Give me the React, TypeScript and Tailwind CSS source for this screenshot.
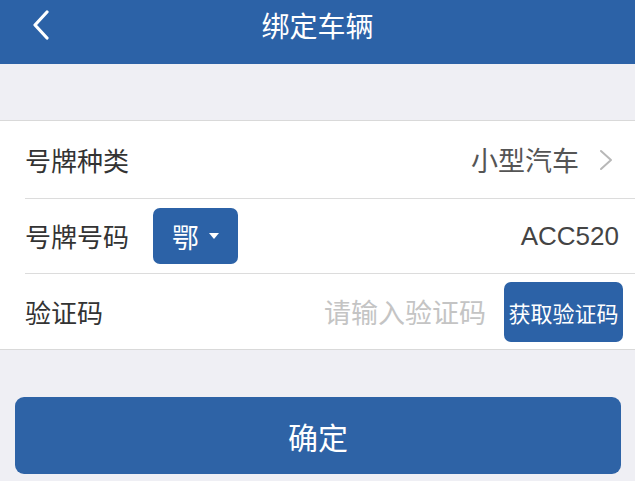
import React from 'react';

const font = { fontFamily: '"Noto Sans CJK SC", "Noto Sans", sans-serif' };

const Row: React.FC<{ label: string; children?: React.ReactNode; last?: boolean; h: string }> = ({ label, children, last, h }) => (
  <div className={`flex items-center pl-[25px] ${h}`}>
    <div className={`flex h-full flex-1 items-center pr-[13px] ${last ? '' : 'border-b border-[#dcdcdc]'}`}>
      <span className="text-[26px] text-[#333] leading-none">{label}</span>
      {children}
    </div>
  </div>
);

export default function App() {
  return (
    <div className="w-[635px] h-[481px] overflow-hidden bg-[#efeff4]" style={font}>
      <header className="relative flex h-16 items-center justify-center bg-[#2c62a7] pb-[14px]">
        <svg className="absolute left-[32px] top-[10px]" width="18" height="30" viewBox="0 0 18 30" fill="none">
          <path d="M15 2 L3 15 L15 28" stroke="white" strokeWidth="3.2" strokeLinecap="round" strokeLinejoin="round" />
        </svg>
        <h1 className="text-[28px] text-white leading-none">绑定车辆</h1>
      </header>

      <div className="h-14" />

      <div className="border-y border-[#d9d9d9] bg-white">
        <Row label="号牌种类" h="h-[78px]">
          <span className="ml-auto text-[27px] text-[#555] leading-none">小型汽车</span>
          <svg className="ml-[20px] mr-[9px]" width="14" height="22" viewBox="0 0 14 22" fill="none">
            <path d="M2 2 L12 11 L2 20" stroke="#b8b8b8" strokeWidth="2" strokeLinecap="round" strokeLinejoin="round" />
          </svg>
        </Row>
        <Row label="号牌号码" h="h-[75px]">
          <button className="ml-[24px] flex h-[56px] w-[85px] items-center justify-center gap-[10px] rounded-[7px] bg-[#2c62a7] text-white">
            <span className="text-[27px] leading-none">鄂</span>
            <svg width="10" height="6" viewBox="0 0 10 6">
              <path d="M0 0 L10 0 L5 6 Z" fill="white" />
            </svg>
          </button>
          <span className="ml-auto mr-[3px] text-[26px] text-[#444] leading-none" style={{ fontFamily: '"Liberation Sans", Arial, sans-serif' }}>ACC520</span>
        </Row>
        <Row label="验证码" last h="h-[75px]">
          <span className="ml-auto text-[27px] text-[#c4c4c4] leading-none">请输入验证码</span>
          <button className="ml-[18px] mr-[-1px] flex h-[60px] w-[119px] items-center justify-center rounded-[7px] bg-[#2c62a7] text-[22px] text-white leading-none">
            获取验证码
          </button>
        </Row>
      </div>

      <div className="px-[15px] pr-[14px] pt-[47px]">
        <button className="flex h-[77px] w-full items-center justify-center rounded-[9px] bg-[#2e63a6] text-[30px] text-white leading-none">
          确定
        </button>
      </div>
    </div>
  );
}
